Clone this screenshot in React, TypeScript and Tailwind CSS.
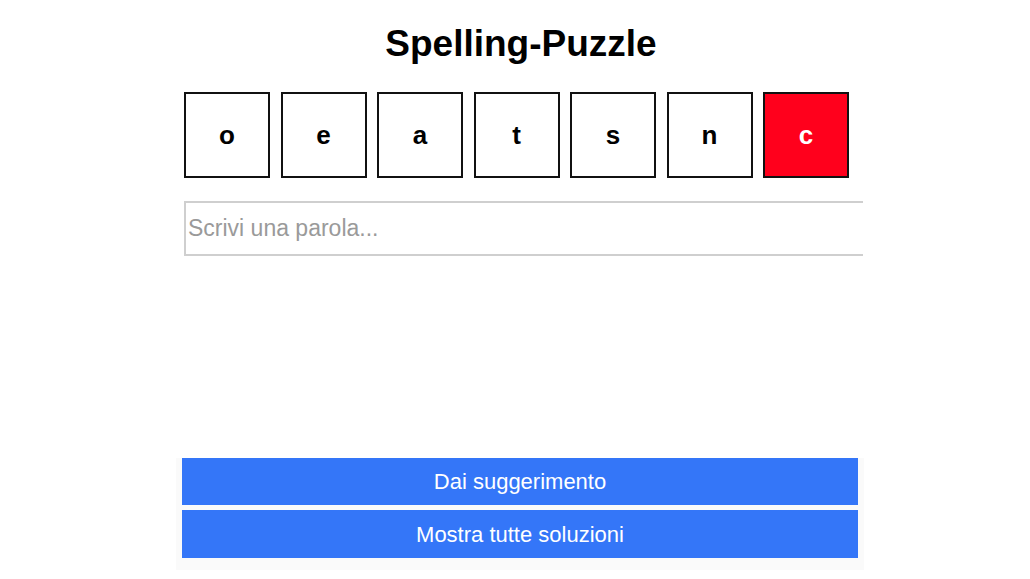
import React from 'react';

const letters = ['o', 'e', 'a', 't', 's', 'n', 'c'];

export default function App() {
  return (
    <div className="w-[1030px] h-[579px] bg-white overflow-hidden font-['Liberation_Sans',Arial,sans-serif]">
      <div className="flex flex-col items-center pt-[22px]">
        <h1 className="text-[37px] font-bold leading-[44px] text-black ml-[12px]">Spelling-Puzzle</h1>

        <div className="flex gap-[10.5px] mt-[26px] ml-[3px]">
          {letters.map((l, i) => (
            <div
              key={l}
              className={`w-[86px] h-[86px] border-2 border-[#111] flex items-center justify-center text-[26px] font-bold ${
                i === letters.length - 1 ? 'bg-[#ff001c] text-white' : 'bg-white text-black'
              }`}
            >
              {l}
            </div>
          ))}
        </div>

        {/* input is cut off on the right */}
        <div className="w-[679px] ml-[17px] mt-[23px] overflow-hidden">
          <input
            className="w-[720px] h-[55px] border-2 border-[#cfcfcf] px-[2px] text-[23px] text-black placeholder:text-[#9a9a9a] outline-none"
            placeholder="Scrivi una parola..."
          />
        </div>

        <div className="w-[688px] ml-[10px] mt-[202px] bg-[#fafafa] pb-[12px] px-[6px] flex flex-col gap-[5px]">
          <button className="h-[47px] w-full bg-[#3476f8] text-white text-[22px]">
            Dai suggerimento
          </button>
          <button className="h-[48px] w-full bg-[#3476f8] text-white text-[22px]">
            Mostra tutte soluzioni
          </button>
        </div>
      </div>
    </div>
  );
}
